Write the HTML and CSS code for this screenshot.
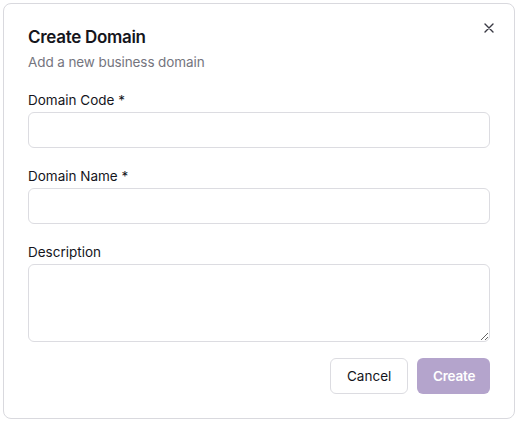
FILE: index.html
```html
<!DOCTYPE html>
<html lang="en">
<head>
<meta charset="utf-8">
<title>Create Domain</title>
<link rel="stylesheet" href="styles.css">
</head>
<body>
<div class="dialog">
  <button class="close" aria-label="Close">
    <svg width="10" height="10" viewBox="0 0 10 10"><path d="M1 1 L9 9 M9 1 L1 9" stroke="#3a3a44" stroke-width="1.4" stroke-linecap="round"/></svg>
  </button>
  <div class="header">
    <h2 class="title">Create Domain</h2>
    <p class="subtitle">Add a new business domain</p>
  </div>
  <div class="field">
    <label class="label">Domain Code *</label>
    <input class="input" type="text">
  </div>
  <div class="field">
    <label class="label">Domain Name *</label>
    <input class="input" type="text">
  </div>
  <div class="field field-last">
    <label class="label">Description</label>
    <textarea class="textarea"></textarea>
  </div>
  <div class="actions">
    <button class="btn btn-outline">Cancel</button>
    <button class="btn btn-primary">Create</button>
  </div>
</div>
</body>
</html>
```
FILE: styles.css
```css
* { box-sizing: border-box; }
html, body { margin: 0; background: #fff; }
body {
  padding: 3px;
  font-family: Inter, "Liberation Sans", sans-serif;
  color: #15151c;
}
.dialog {
  position: relative;
  width: 512px;
  height: 416px;
  border: 1px solid #d9d9de;
  border-radius: 8px;
  padding: 24px;
  display: flex;
  flex-direction: column;
  background: #fff;
}
.close {
  position: absolute;
  top: 18px;
  right: 19px;
  width: 12px;
  height: 12px;
  padding: 0;
  border: 0;
  background: none;
  display: flex;
  align-items: center;
  justify-content: center;
}
.header { margin-bottom: 18px; }
.title {
  margin: 0;
  font-size: 17px;
  line-height: 18px;
  font-weight: 600;
  letter-spacing: -0.3px;
  color: #15151c;
}
.subtitle {
  margin: 6px 0 0;
  font-size: 13.5px;
  line-height: 20px;
  color: #75757e;
  letter-spacing: -0.1px;
}
.field {
  display: flex;
  flex-direction: column;
  gap: 2px;
  margin-bottom: 18px;
}
.field-last { margin-bottom: 16px; }
.label {
  font-size: 13.5px;
  line-height: 20px;
  font-weight: 400;
  color: #15151c;
  letter-spacing: 0;
}
.input, .textarea {
  width: 100%;
  border: 1px solid #dcdce1;
  border-radius: 6px;
  background: #fff;
  font: inherit;
  outline: none;
}
.input { height: 36px; }
.textarea { height: 78px; resize: vertical; }
.actions {
  display: flex;
  justify-content: flex-end;
  gap: 9px;
}
.btn {
  height: 36px;
  border-radius: 6px;
  font-family: Inter, "Liberation Sans", sans-serif;
  font-size: 13.5px;
  font-weight: 400;
  padding: 0 16px;
}
.btn-outline {
  width: 78px;
  background: #fff;
  border: 1px solid #dcdce1;
  color: #15151c;
}
.btn-primary {
  width: 73px;
  background: #b4a4cc;
  border: 0;
  color: #fff;
  font-weight: 600;
  letter-spacing: -0.2px;
}
```
